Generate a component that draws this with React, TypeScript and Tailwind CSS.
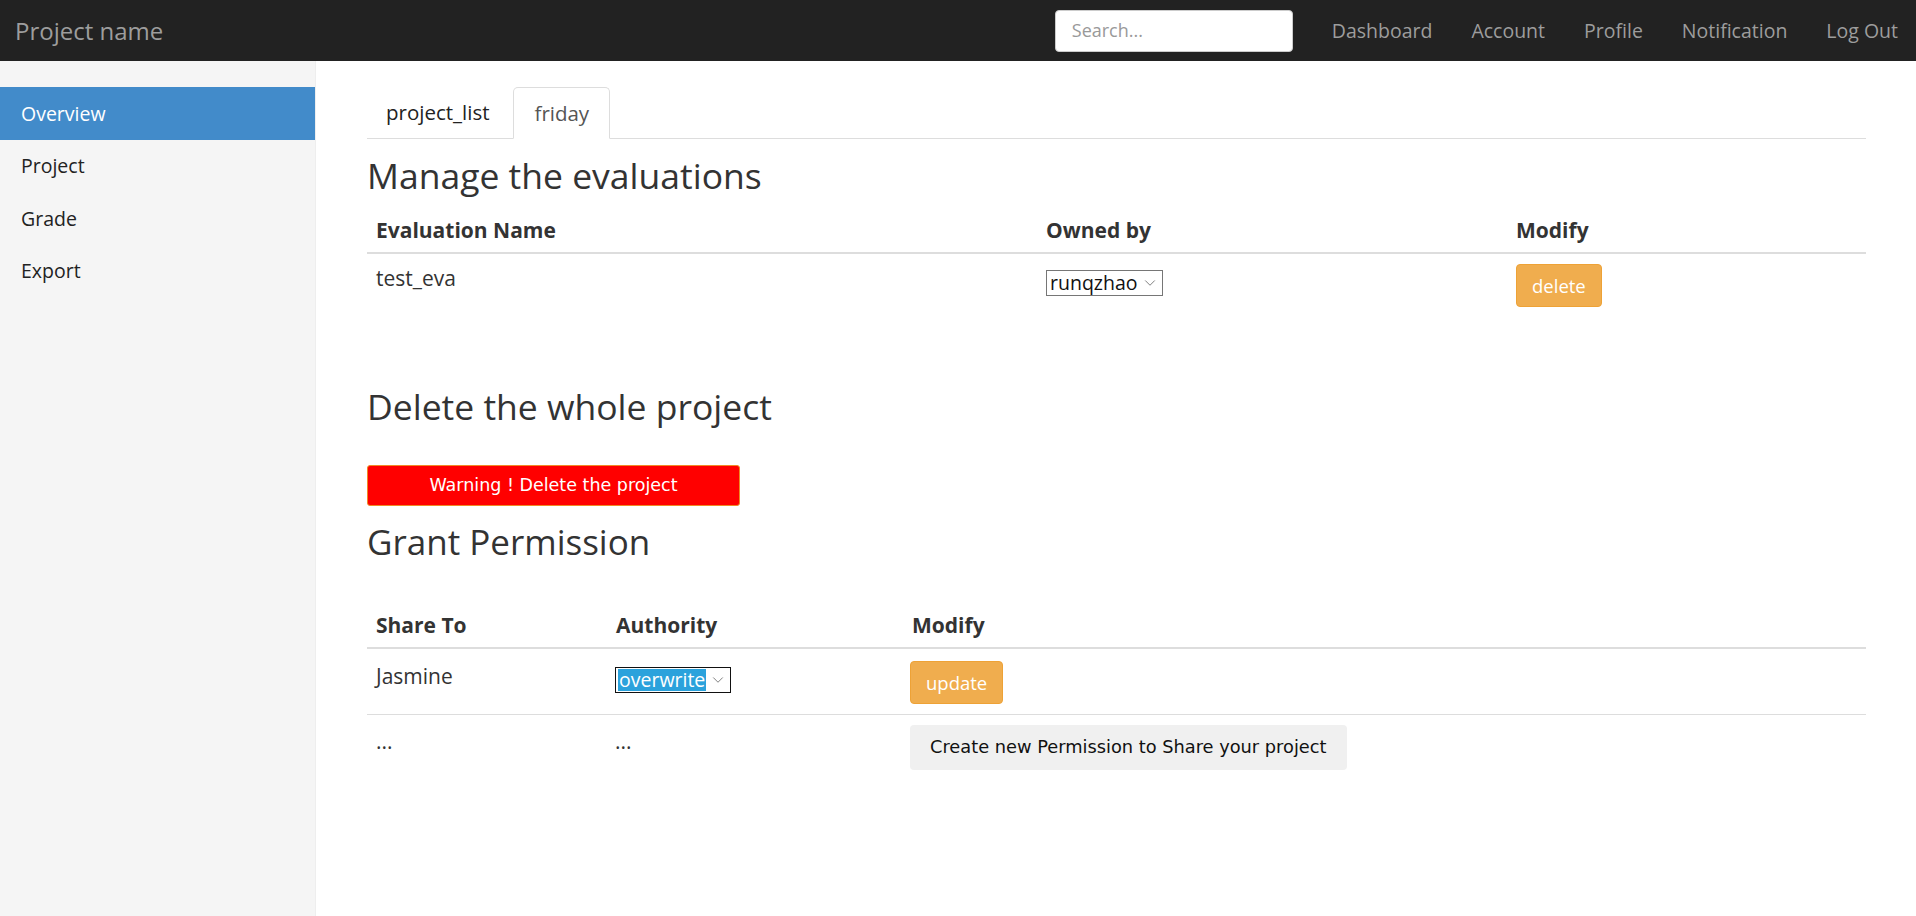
import { ChevronDown } from 'lucide-react';

const font = "font-['Open_Sans','Liberation_Sans',sans-serif]";
const navLinks = ['Dashboard', 'Account', 'Profile', 'Notification', 'Log Out'];
const sideLinks = ['Overview', 'Project', 'Grade', 'Export'];

const Select = ({ value, selected }: { value: string; selected?: boolean }) => (
  <div
    className={`inline-flex items-center h-[26px] border bg-white pl-[2px] pr-[3px] text-[19.5px] ${
      selected ? 'border-[#111]' : 'border-[#767676]'
    }`}
  >
    <span className={`leading-[22px] px-[1px] ${selected ? 'bg-[#2ba2dc] text-white' : 'text-[#111]'}`}>{value}</span>
    <ChevronDown className="w-[18px] h-[18px] ml-[3px] text-[#555]" strokeWidth={1} />
  </div>
);

const WarnButton = ({ label }: { label: string }) => (
  <button className="h-[43px] px-[15px] rounded-[4px] bg-[#f0ad4e] border border-[#eea236] text-white text-[18.5px]">
    {label}
  </button>
);

export default function App() {
  return (
    <div className={`min-h-[916px] flex flex-col bg-white text-[#333] ${font}`}>
      {/* top navbar */}
      <header className="h-[61px] bg-[#222] flex items-center pl-[15px] pr-[18px]">
        <span className="text-[24px] text-[#9d9d9d]">Project name</span>
        <div className="ml-auto flex items-center">
          <div className="w-[238px] h-[42px] bg-white rounded-[4px] border border-[#ccc] flex items-center px-[16px] text-[18px] text-[#999]">
            Search...
          </div>
          <nav className="flex items-center ml-[39px] gap-[39px] text-[19.5px] text-[#9d9d9d]">
            {navLinks.map((l) => (
              <span key={l}>{l}</span>
            ))}
          </nav>
        </div>
      </header>

      <div className="flex flex-1">
        {/* sidebar */}
        <aside className="w-[316px] bg-[#f5f5f5] border-r border-[#eee] pt-[26px]">
          {sideLinks.map((l, i) => (
            <div
              key={l}
              className={`h-[52.5px] flex items-center pl-[21px] text-[19.5px] ${
                i === 0 ? 'bg-[#428bca] text-white' : 'text-[#222]'
              }`}
            >
              {l}
            </div>
          ))}
        </aside>

        {/* main */}
        <main className="flex-1 pl-[51px] pr-[50px] pt-[26px]">
          <div className="flex h-[52px] border-b border-[#ddd] text-[20.5px]">
            <div className="pl-[19px] pr-[24px] flex items-center text-[#222]">project_list</div>
            <div className="px-[20px] flex items-center text-[#555] border border-[#ddd] border-b-white rounded-t-[5px] -mb-px bg-white">
              friday
            </div>
          </div>

          <h2 className="mt-[16px] mb-[13px] text-[35.5px] leading-[40px] text-[#333]">Manage the evaluations</h2>
          <div className="grid grid-cols-[669px_470px_1fr] text-[21px]">
            <div className="px-[9px] py-[10px] leading-[24px] font-bold border-b-2 border-[#ddd]">Evaluation Name</div>
            <div className="px-[10px] py-[10px] leading-[24px] font-bold border-b-2 border-[#ddd]">Owned by</div>
            <div className="px-[10px] py-[10px] leading-[24px] font-bold border-b-2 border-[#ddd]">Modify</div>
            <div className="px-[9px] pt-[12px] pb-[10px] leading-[24px]">test_eva</div>
            <div className="px-[10px] pt-[13px]">
              <Select value="runqzhao" />
            </div>
            <div className="px-[10px] pt-[10px] pb-[10px]">
              <WarnButton label="delete" />
            </div>
          </div>

          <h2 className="mt-[69px] text-[35.5px] leading-[40px] text-[#333]">Delete the whole project</h2>
          <button className="mt-[39px] w-[373px] h-[41px] bg-[#ff0000] border border-[#f08a24] rounded-[3px] text-white text-[17.5px] font-['DejaVu_Sans',sans-serif]">
            Warning ! Delete the project
          </button>

          <h2 className="mt-[16px] text-[35px] leading-[40px] text-[#333]">Grant Permission</h2>
          <div className="mt-[41px] grid grid-cols-[239px_296px_1fr] text-[21px]">
            <div className="px-[9px] py-[10px] leading-[24px] font-bold border-b-2 border-[#ddd]">Share To</div>
            <div className="px-[10px] py-[10px] leading-[24px] font-bold border-b-2 border-[#ddd]">Authority</div>
            <div className="px-[10px] py-[10px] leading-[24px] font-bold border-b-2 border-[#ddd]">Modify</div>

            <div className="px-[9px] pt-[15px] leading-[24px] border-b border-[#ddd]">Jasmine</div>
            <div className="px-[9px] pt-[15px] border-b border-[#ddd]">
              <Select value="overwrite" selected />
            </div>
            <div className="px-[8px] pt-[12px] pb-[10px] border-b border-[#ddd]">
              <WarnButton label="update" />
            </div>

            <div className="px-[9px] pt-[14px] leading-[24px]">...</div>
            <div className="px-[9px] pt-[14px] leading-[24px]">...</div>
            <div className="px-[8px] pt-[10px]">
              <button className="h-[45px] px-[20px] rounded-[4px] bg-[#f0f0f0] text-[#111] text-[17.8px] font-['DejaVu_Sans',sans-serif]">
                Create new Permission to Share your project
              </button>
            </div>
          </div>
        </main>
      </div>
    </div>
  );
}
